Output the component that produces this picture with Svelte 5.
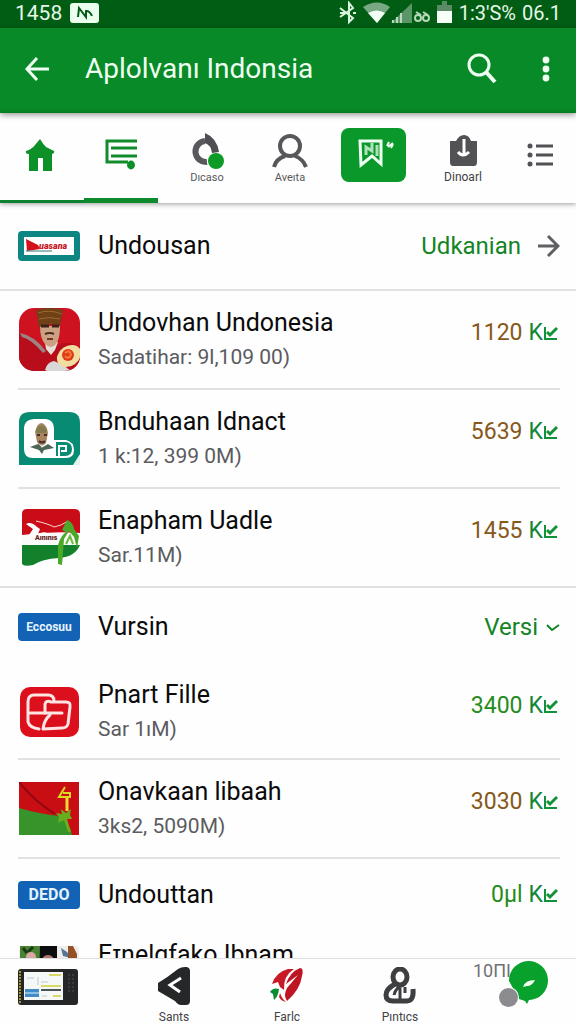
<script lang="ts">
  type Item = {
    kind: 'header' | 'app';
    icon: string;
    title: string;
    sub?: string;
    price?: string;
    unit?: string;
    tone?: 'brown' | 'green';
    link?: string;
    divider?: 'full' | 'inset' | 'none';
    size?: string;
  };

  const items: Item[] = [
    { kind: 'header', icon: 'teal', title: 'Undousan', link: 'Udkanian', divider: 'full', size: 'tall' },
    { kind: 'app', icon: 'portrait', title: 'Undovhan Undonesia', sub: 'Sadatihar: 9l,109 00)', price: '1120', unit: 'K', tone: 'brown', divider: 'inset' },
    { kind: 'app', icon: 'parking', title: 'Bnduhaan Idnact', sub: '1 k:12, 399 0M)', price: '5639', unit: 'K', tone: 'brown', divider: 'inset' },
    { kind: 'app', icon: 'banner', title: 'Enapham Uadle', sub: 'Sar.11M)', price: '1455', unit: 'K', tone: 'brown', divider: 'full' },
    { kind: 'header', icon: 'blue', title: 'Vursin', link: 'Versi', divider: 'none', size: 'medium' },
    { kind: 'app', icon: 'folder', title: 'Pnart Fille', sub: 'Sar 1ıM)', price: '3400', unit: 'K', tone: 'green', divider: 'inset', size: 'snug' },
    { kind: 'app', icon: 'flag', title: 'Onavkaan libaah', sub: '3ks2, 5090M)', price: '3030', unit: 'K', tone: 'brown', divider: 'inset' },
    { kind: 'header', icon: 'needo', title: 'Undouttan', price: '0µl', unit: 'K', tone: 'green', divider: 'none', size: 'short' },
    { kind: 'app', icon: 'photos', title: 'Eɪnelgfako Ibnam', divider: 'none', size: 'peek' }
  ];
</script>

{#snippet art(name: string)}
  {#if name === 'teal'}
    <svg width="62" height="30" viewBox="0 0 62 30" aria-hidden="true">
      <rect width="62" height="30" rx="4" fill="#0c8583" />
      <rect x="6" y="6" width="50" height="18" fill="#fff" />
      <path d="M8 8 L20 14 L22 18 L9 20Z" fill="#d3111c" />
      <path d="M8 20 L34 20" stroke="#2f7d78" stroke-width="1" />
      <text x="21" y="18" font-size="9" font-weight="900" font-style="italic" fill="#c8141e">uasana</text>
    </svg>
  {:else if name === 'blue' || name === 'needo'}
    <span class="tag" class:big={name === 'needo'}>{name === 'blue' ? 'Eccosuu' : 'DEDO'}</span>
  {:else if name === 'portrait'}
    <svg width="61" height="63" viewBox="0 0 61 63" aria-hidden="true">
      <defs><clipPath id="round"><rect width="61" height="63" rx="15" /></clipPath></defs>
      <g clip-path="url(#round)">
        <rect width="61" height="63" fill="#cf1220" />
        <path d="M0 25 Q10 27 23 39 L38 38 Q49 31 61 39 V63 H0Z" fill="#b80d1b" />
        <path d="M1 25 Q14 27 27 43 L24 45 Q12 31 3 29Z" fill="#9a8585" />
        <path d="M26 34 h13 l-3 8 -4 5 -5 -6Z" fill="#e7ded8" />
        <path d="M21 18 H41 Q41 31 37 36 Q32 42 26 36 Q21 30 21 18Z" fill="#cba184" />
        <path d="M17 2 Q29 -2 44 2 L41 18 Q31 14 20 19Z" fill="#704016" />
        <path d="M19 5 Q30 1 43 6 M20 11 Q30 8 41 11" stroke="#9b6a32" fill="none" />
        <path d="M22 18 h8 m3 0 h7" stroke="#3c211a" stroke-width="3" />
        <path d="M26 26 q5 -2 9 0" stroke="#4d2c20" stroke-width="2" fill="none" />
        <path d="M28 31 h6" stroke="#7d3027" stroke-width="2" />
        <path d="M26 62 Q28 54 35 53 L44 57 L52 63 H28Z" fill="#d8d8d8" />
        <ellipse cx="50" cy="48" rx="13" ry="10" fill="#f2dda0" transform="rotate(-35 50 48)" />
        <circle cx="49" cy="47" r="6" fill="#e0391c" />
        <path d="M46 45 q5 -4 6 2 q-3 5 -6 1" fill="none" stroke="#f47d35" stroke-width="2" />
      </g>
    </svg>
  {:else if name === 'parking'}
    <svg width="61" height="53" viewBox="0 0 61 53" aria-hidden="true">
      <path d="M0 53 V10 Q0 0 11 0 H50 Q61 0 61 11 V53Z" fill="#078b73" />
      <path d="M5 17 Q5 7 16 7 H27 Q35 8 35 17 V28 H47 Q55 30 55 38 Q55 46 47 46 H14 Q5 46 5 37Z" fill="#fff" />
      <path d="M37 30 H47 Q53 31 53 37 Q53 44 46 44 H37Z" fill="#078b73" />
      <path d="M40 44 V34 H47 V39 H42" fill="none" stroke="#fff" stroke-width="2" />
      <path d="M54 53 L61 42 V53Z" fill="#e5f3ee" />
      <path d="M16 20 Q18 11 23 11 Q28 13 29 21 L27 31 Q23 37 18 30Z" fill="#a88462" />
      <path d="M17 18 Q22 9 28 18 L27 21 H18Z" fill="#827b4f" />
      <path d="M11 35 L19 32 L24 35 L29 32 L35 36 L25 38 L23 42 L20 38Z" fill="#4c6557" />
      <path d="M18 23 h3 m4 0 h3 M20 29 q3 3 6 0" stroke="#492c25" stroke-width="2" fill="none" />
      <path d="M20 32 q3 2 6 0 l-3 4Z" fill="#e6ded0" />
    </svg>
  {:else if name === 'banner'}
    <svg class="shift" width="58" height="58" viewBox="0 0 58 58" aria-hidden="true">
      <path d="M0 5 Q0 0 5 0 H52 Q58 0 58 5 V26 H0Z" fill="#ca0c18" />
      <path d="M0 26 Q30 22 58 24 V37 H0Z" fill="#fafafa" />
      <path d="M0 36 H58 Q53 48 37 49 Q20 50 11 56 Q0 58 0 54Z" fill="#13802b" />
      <path d="M4 15 Q9 12 15 18 L18 20 L16 25 Q23 21 29 26 L19 28 L7 26 L11 20Z" fill="#fff" />
      <path d="M14 12 Q27 15 32 18 Q39 17 46 12" stroke="#fbd7c8" stroke-width="1" fill="none" />
      <text x="13" y="31" font-size="7" font-weight="900" fill="#681b20">Aınınıs</text>
      <path d="M45 11 Q51 13 52 20 L57 27 L55 39 L52 28 L47 22 L42 30 L40 56 L36 55 L36 36 Q38 28 44 23 L40 21Z" fill="#4ba92a" />
      <path d="M44 35 L48 27 L51 35" stroke="#63bc37" stroke-width="2" fill="none" />
    </svg>
  {:else if name === 'folder'}
    <svg width="60" height="50" viewBox="0 0 60 50" aria-hidden="true">
      <rect x="1" width="59" height="50" rx="10" fill="#dc101c" />
      <g fill="none" stroke="#ffe4e4" stroke-width="3" stroke-linejoin="round" stroke-linecap="round">
        <path d="M35 14 Q35 8 29 8 H15 Q9 8 9 15 V35 Q11 41 20 42" />
        <path d="M24 42 Q25 33 31 28 M26 26 V17 Q27 13 32 15 H47 Q52 15 51 20 L49 37 Q48 41 43 41 L24 42" />
        <path d="M11 26 H43" />
      </g>
    </svg>
  {:else if name === 'flag'}
    <svg width="60" height="53" viewBox="0 0 60 53" aria-hidden="true">
      <rect width="60" height="53" fill="#c90e13" />
      <path d="M0 0 Q15 19 36 32" fill="none" stroke="#8f0710" stroke-width="2" />
      <path d="M0 26 Q21 32 40 34 Q50 39 53 53 H0Z" fill="#36942b" />
      <path d="M37 31 l6 1 -1 -5 5 4 5 -4 -1 6 2 4 -5 0 4 13 -3 0 -4 -12 -6 3 1 -6Z" fill="#68ad1d" />
      <path d="M48 29 V15" stroke="#f1d735" stroke-width="3" />
      <path d="M46 5 L40 15 H51 V11 L44 11" stroke="#dfd821" stroke-width="2" fill="none" />
    </svg>
  {:else}
    <svg width="60" height="40" viewBox="0 0 60 40" aria-hidden="true">
      <rect width="60" height="40" rx="3" fill="#efeeea" />
      <path d="M1 0 H21 V40 H1Z" fill="#498332" />
      <path d="M4 2 l4 5 M14 1 l-5 5" stroke="#183b16" stroke-width="3" />
      <circle cx="12" cy="11" r="5" fill="#d9a7a5" />
      <path d="M21 0 H38 V40 H20Z" fill="#0c0d0e" />
      <ellipse cx="29" cy="12" rx="5" ry="3" fill="#aa786f" />
      <path d="M42 2 l6 4 4 6 -8 -2Z" fill="#52779a" />
      <path d="M49 0 h5 l4 8 v10 H49Z" fill="#935126" />
    </svg>
  {/if}
{/snippet}

{#snippet tick()}
  <svg class="tick" width="15" height="18" viewBox="0 0 15 18" aria-hidden="true">
    <path d="M2 3 V15 H14" stroke-width="2" />
    <path d="M4 8 L7 11 L14 4" stroke-width="3" />
  </svg>
{/snippet}

<div class="screen">
  <div class="status">
    <span class="clock">1458</span>
    <svg width="29" height="20" viewBox="0 0 29 20" aria-hidden="true">
      <rect width="29" height="20" rx="3" fill="#eaffee" />
      <path d="M8 14 L9 5 L16 14 V8 Q20 8 22 13" fill="none" stroke="#07591a" stroke-width="2" />
    </svg>
    <div class="status-right">
      <svg width="114" height="24" viewBox="0 0 114 24" aria-hidden="true">
        <path d="M1 7 L14 17 L10 21 V2 L14 7 L1 16 M1 12 H7 M14 12 h3" fill="none" stroke="#d9f5df" stroke-width="2" />
        <path d="M24 6 Q38 -3 51 6 L38 22Z" fill="#78a983" />
        <path d="M29 12 Q38 7 46 12 L38 22Z" fill="#f3fff5" />
        <path d="M52 22 L73 2 V22Z" fill="#5b9668" />
        <path d="M54 22 v-3 M58 22 v-6 M62 22 v-10" stroke="#b9d8be" stroke-width="2" />
        <g fill="none" stroke="#b5d8bb" stroke-width="2">
          <circle cx="79" cy="17" r="3" /><circle cx="87" cy="17" r="3" /><path d="M77 11 l5 3 m2 -3 l5 3" />
        </g>
        <path d="M98 4 h5 v-4 h5 v4 h5 v7 H98Z" fill="#5b8b66" />
        <path d="M98 10 H113 V22 H98Z" fill="#f5fff6" />
      </svg>
      <span class="battery">1:3'S%</span>
      <span>06.1</span>
    </div>
  </div>

  <header>
    <button class="back" aria-label="Back">
      <svg width="26" height="26" viewBox="0 0 26 26" aria-hidden="true">
        <path d="M13 2 L3 13 L13 24 M3 13 H25" fill="none" stroke="#effff1" stroke-width="3" />
      </svg>
    </button>
    <h1>Aplolvanı Indonsia</h1>
    <button aria-label="Search">
      <svg width="30" height="32" viewBox="0 0 30 32" aria-hidden="true">
        <circle cx="12" cy="12" r="10" fill="none" stroke="#effff1" stroke-width="3" />
        <path d="M19 19 L28 29" stroke="#effff1" stroke-width="4" />
      </svg>
    </button>
    <button class="more" aria-label="More options">
      <svg width="8" height="26" viewBox="0 0 8 26" fill="#effff1" aria-hidden="true">
        <circle cx="4" cy="4" r="3.4" /><circle cx="4" cy="13" r="3.4" /><circle cx="4" cy="22" r="3.4" />
      </svg>
    </button>
  </header>

  <nav class="tabs" aria-label="Categories">
    <button class="tab home" aria-label="Home">
      <svg width="30" height="32" viewBox="0 0 30 32" fill="#0d9027" aria-hidden="true">
        <path d="M15 0 Q18 5 21 8 L29 12 Q30 14 27 15 V32 H18 V19 H13 V32 H4 V15 Q0 15 1 12 Q7 10 10 6Z" />
      </svg>
    </button>
    <button class="tab list" aria-label="List">
      <svg width="34" height="32" viewBox="0 0 34 32" aria-hidden="true">
        <path d="M33 3 H3 V24 H24" fill="none" stroke="#138b2a" stroke-width="3" />
        <path d="M7 10 H33 M7 18 H33" stroke="#138b2a" stroke-width="3" />
        <ellipse cx="27" cy="27" rx="4" ry="4.4" fill="#0d9027" />
      </svg>
    </button>
    <button class="tab labelled">
      <svg width="34" height="36" viewBox="0 0 34 36" aria-hidden="true">
        <path d="M15 8 A10 10 0 0 0 17 29" fill="none" stroke="#59595d" stroke-width="6" />
        <path d="M15 0 Q27 5 29 19 L22 20 Q21 12 15 10Z" fill="#4f4f53" />
        <circle cx="26" cy="28" r="8" fill="#0d9a27" />
      </svg>
      <span>Dıcaso</span>
    </button>
    <button class="tab labelled">
      <svg width="36" height="36" viewBox="0 0 36 36" fill="none" stroke="#57575b" stroke-width="4" aria-hidden="true">
        <circle cx="18" cy="13" r="10" />
        <path d="M2 34 Q4 26 13 23 M23 23 Q31 26 34 34" />
      </svg>
      <span>Aveıta</span>
    </button>
    <button class="tab" aria-label="Bookmarks">
      <span class="tile">
        <svg width="38" height="30" viewBox="0 0 38 30" aria-hidden="true">
          <path d="M3 3 H24 V26 L15 18 L4 27 Z" fill="none" stroke="#edfff0" stroke-width="3" />
          <path d="M9 17 V9 L15 13 V5 M20 7 V18" fill="none" stroke="#b0e2b7" stroke-width="3" />
          <path d="M30 8 l2 -4 M31 9 l5 -4 M34 10 l2 -4" stroke="#edfff0" stroke-width="2" />
        </svg>
      </span>
    </button>
    <button class="tab labelled dark">
      <svg width="29" height="34" viewBox="0 0 29 34" aria-hidden="true">
        <path d="M1 7 H7 Q10 1 15 1 Q20 1 22 7 H28 V28 Q28 32 25 32 H4 Q1 32 1 28Z" fill="#515156" />
        <path d="M15 5 V21 M9 18 Q14 24 20 18" fill="none" stroke="#fff" stroke-width="3" />
      </svg>
      <span>Dinoarl</span>
    </button>
    <button class="tab" aria-label="All">
      <svg width="26" height="24" viewBox="0 0 26 24" fill="#515156" aria-hidden="true">
        <circle cx="3" cy="3" r="2.500" /><circle cx="3" cy="12" r="2.500" /><circle cx="3" cy="21" r="2.500" />
        <path d="M9 1.500 h17 v3 H9Z m0 9 h17 v3 H9Z m0 9 h17 v3 H9Z" />
      </svg>
    </button>
  </nav>

  <main>
    {#each items as item}
      <div class="row {item.kind} {item.size ?? ''} {item.divider}">
        <div class="art">{@render art(item.icon)}</div>
        <div class="info">
          <h2>{item.title}</h2>
          {#if item.sub}<p>{item.sub}</p>{/if}
        </div>
        {#if item.link}
          <a class="link" href="#{item.link}">
            {item.link}
            {#if item.link === 'Versi'}
              <svg width="15" height="10" viewBox="0 0 15 10" aria-hidden="true">
                <path d="M2 3 L7 8 L14 3" fill="none" stroke="#128426" stroke-width="2" />
              </svg>
            {:else}
              <svg class="arrow" width="23" height="24" viewBox="0 0 23 24" aria-hidden="true">
                <path d="M1 12 H20 M11 2 L21 12 L11 22" fill="none" stroke="#606064" stroke-width="3" />
              </svg>
            {/if}
          </a>
        {:else if item.price}
          <div class="price {item.tone}">
            {item.price} <span class="unit">{item.unit}{@render tick()}</span>
          </div>
        {/if}
      </div>
    {/each}
  </main>

  <nav class="bottom" aria-label="Main">
    <a class="device" href="#device" aria-label="Device">
      <svg width="60" height="36" viewBox="0 0 60 36" aria-hidden="true">
        <rect width="60" height="36" rx="3" fill="#242627" />
        <path d="M2 2 V34" stroke="#a7952b" stroke-width="2" stroke-dasharray="2 1" />
        <rect x="6" y="3" width="39" height="28" fill="#f4f8f7" />
        <path d="M7 20 h14 v8 H7Z" fill="#438bc4" />
        <path d="M7 24 h14" stroke="#8fc0df" stroke-width="2" />
        <path d="M23 21 h20" stroke="#4b545b" stroke-width="2" />
        <path d="M31 6 h12 M23 17 h20 M35 27 h8" stroke="#d8d966" stroke-width="2" />
        <path d="M9 9 h7 M20 8 v8 M23 13 h7 M24 27 h5" stroke="#bac9cf" stroke-width="1" />
        <path d="M51 5 v18 M55 5 v18" stroke="#3a3d3e" stroke-width="2" stroke-dasharray="2 2" />
      </svg>
    </a>
    <a href="#sants">
      <svg width="32" height="38" viewBox="0 0 32 38" aria-hidden="true">
        <path d="M0 16 Q10 10 20 2 Q23 0 27 0 H29 Q32 1 32 4 V34 Q32 38 28 38 H23 Q20 38 17 34 L0 24Z" fill="#252728" />
        <path d="M23 11 L12 18 L22 25" fill="none" stroke="#fff" stroke-width="3" />
      </svg>
      <span>Sants</span>
    </a>
    <a href="#farlc">
      <svg width="34" height="38" viewBox="0 0 34 38" aria-hidden="true">
        <path d="M2 17 Q6 5 18 2 H24 Q13 9 14 23 L10 20 L8 15Z" fill="#c81927" />
        <path d="M30 1 Q34 1 32 9 Q30 23 17 34 Q13 28 17 21 L28 8 L16 17 Q20 5 30 1Z" fill="#bd1524" />
        <path d="M0 25 Q3 20 9 22 Q8 30 4 33 L3 27Z" fill="#078b33" />
        <path d="M10 26 Q12 32 16 35 Q11 34 9 30Z" fill="#c81927" />
      </svg>
      <span>Farlc</span>
    </a>
    <a href="#pintics">
      <svg width="34" height="38" viewBox="0 0 34 38" fill="none" stroke="#3d3f41" stroke-width="5" aria-hidden="true">
        <ellipse cx="17" cy="10" rx="7" ry="8" />
        <path d="M12 17 Q3 22 3 28 Q3 34 10 34 H24 Q31 34 30 22" />
        <path d="M11 28 Q13 20 20 18 M17 21 V33 M22 20 V26" stroke-width="3" />
      </svg>
      <span>Pıntıcs</span>
    </a>
    <div class="corner">
      <span>10ПI</span>
      <button class="fab" aria-label="Compose">
        <svg width="49" height="48" viewBox="0 0 49 48" aria-hidden="true">
          <path d="M10 21 A19.500 19.500 0 1 1 30 40 L28 44 L26 41 L20 39Z" fill="#07a12c" />
          <path d="M24 27 Q26 20 36 20 Q33 26 28 26Z" fill="#f1fff2" />
          <circle cx="9.500" cy="37.500" r="10.500" fill="#fff" />
          <circle cx="9.500" cy="37.500" r="9.500" fill="#8c8b90" />
        </svg>
      </button>
    </div>
  </nav>
</div>

<style>
  :global(body) {
    margin: 0;
    background: #fefefe;
  }

  .screen {
    --green: #078a27;
    --line: #e0e1e3;
    display: flex;
    flex-direction: column;
    height: 100vh;
    overflow: hidden;
    font-family: Roboto, "Liberation Sans", sans-serif;
    color: #0b0b0c;
  }

  button {
    padding: 0;
    border: 0;
    background: none;
    font: inherit;
    color: inherit;
    cursor: pointer;
  }

  a {
    color: inherit;
    text-decoration: none;
  }

  svg {
    display: block;
    flex: none;
  }

  .status {
    display: flex;
    align-items: center;
    gap: 8px;
    flex: none;
    height: 28px;
    padding: 0 15px 3px;
    box-sizing: border-box;
    background: #025d14;
    color: #e5f8e8;
    font-size: 21px;
  }

  .status-right {
    display: flex;
    align-items: center;
    gap: 6px;
    margin-left: auto;
    font-size: 20px;
  }

  header {
    display: flex;
    align-items: center;
    flex: none;
    height: 85px;
    padding: 0 26px 4px 24px;
    box-sizing: border-box;
    background: var(--green);
    box-shadow: 0 2px 6px rgba(0, 0, 0, 0.4);
  }

  h1 {
    flex: 1;
    margin: 0 0 0 35px;
    font-size: 28px;
    font-weight: 400;
    color: #effff1;
  }

  .more {
    margin-left: 45px;
  }

  .tabs {
    display: grid;
    grid-template-columns: 84fr 74fr 98fr 68fr 98fr 82fr 72fr;
    flex: none;
    height: 90px;
    box-shadow: 0 1px 5px rgba(0, 0, 0, 0.4);
  }

  .tab {
    display: flex;
    flex-direction: column;
    align-items: center;
    justify-content: center;
    box-sizing: border-box;
    padding-bottom: 6px;
    color: #58585c;
    font-size: 11px;
    line-height: 12px;
  }

  .home {
    padding-right: 4px;
    border-bottom: 3px solid #0c8130;
    padding-bottom: 3px;
  }

  .list {
    border-bottom: 5px solid #0c8a2c;
    padding-bottom: 3px;
  }

  .labelled {
    gap: 3px;
    padding-bottom: 0;
  }

  .dark {
    font-size: 12px;
    color: #414145;
  }

  .tile {
    display: flex;
    align-items: center;
    justify-content: center;
    width: 65px;
    height: 54px;
    padding: 0 0 4px 5px;
    box-sizing: border-box;
    border-radius: 8px;
    background: #0a982a;
  }

  main {
    flex: 1;
    min-height: 0;
    overflow-y: auto;
    scrollbar-width: none;
  }

  .row {
    display: flex;
    align-items: center;
    min-height: 99px;
    margin: 0 16px 0 18px;
    box-sizing: border-box;
  }

  .tall {
    min-height: 88px;
  }

  .medium {
    min-height: 78px;
  }

  .snug {
    min-height: 94px;
  }

  .short {
    min-height: 71px;
  }

  .peek {
    align-items: flex-start;
    min-height: 60px;
    padding-top: 8px;
  }

  .peek .art {
    padding-top: 8px;
  }

  .inset {
    border-bottom: 2px solid var(--line);
  }

  .full {
    margin: 0;
    padding: 0 16px 0 18px;
    border-bottom: 2px solid var(--line);
  }

  .art {
    flex: none;
    width: 62px;
    margin-right: 18px;
  }

  .app .art {
    padding-left: 1px;
    box-sizing: border-box;
  }

  .shift {
    margin-left: 3px;
  }

  .tag {
    display: flex;
    align-items: center;
    justify-content: center;
    height: 28px;
    border-radius: 4px;
    background: #1262b5;
    color: #e5f4ff;
    font-size: 12px;
    font-weight: 700;
  }

  .big {
    font-size: 16px;
  }

  .info {
    flex: 1;
    min-width: 0;
  }

  h2 {
    margin: 0;
    font-size: 25px;
    font-weight: 400;
    line-height: 34px;
    white-space: nowrap;
  }

  p {
    margin: 0;
    font-size: 21px;
    line-height: 34px;
    color: #5b5b5f;
    white-space: nowrap;
  }

  .link {
    display: flex;
    align-items: center;
    gap: 7px;
    font-size: 24px;
    color: #128426;
  }

  .arrow {
    margin-left: 9px;
  }

  .price {
    display: flex;
    align-items: center;
    gap: 6px;
    padding-right: 2px;
    font-size: 23px;
    line-height: 32px;
  }

  .app .price {
    padding-bottom: 13px;
  }

  .unit {
    display: flex;
    align-items: center;
    color: #128735;
  }

  .tick {
    fill: none;
    stroke: #129238;
  }

  .brown {
    color: #86591a;
  }

  .green {
    color: #268b20;
  }

  .bottom {
    display: grid;
    grid-template-columns: 112fr 124fr 102fr 124fr 114fr;
    flex: none;
    height: 66px;
    box-sizing: border-box;
    border-top: 1px solid var(--line);
    background: #fefefe;
    color: #414145;
    font-size: 12px;
    line-height: 14px;
  }

  .bottom a {
    display: flex;
    flex-direction: column;
    align-items: center;
    gap: 5px;
    padding-top: 8px;
  }

  .bottom .device {
    align-items: flex-start;
    padding: 10px 0 0 18px;
  }

  .corner {
    position: relative;
    padding: 2px 0 0 11px;
    font-size: 18px;
    line-height: 20px;
    color: #707074;
  }

  .fab {
    position: absolute;
    top: 1px;
    right: 28px;
  }
</style>
